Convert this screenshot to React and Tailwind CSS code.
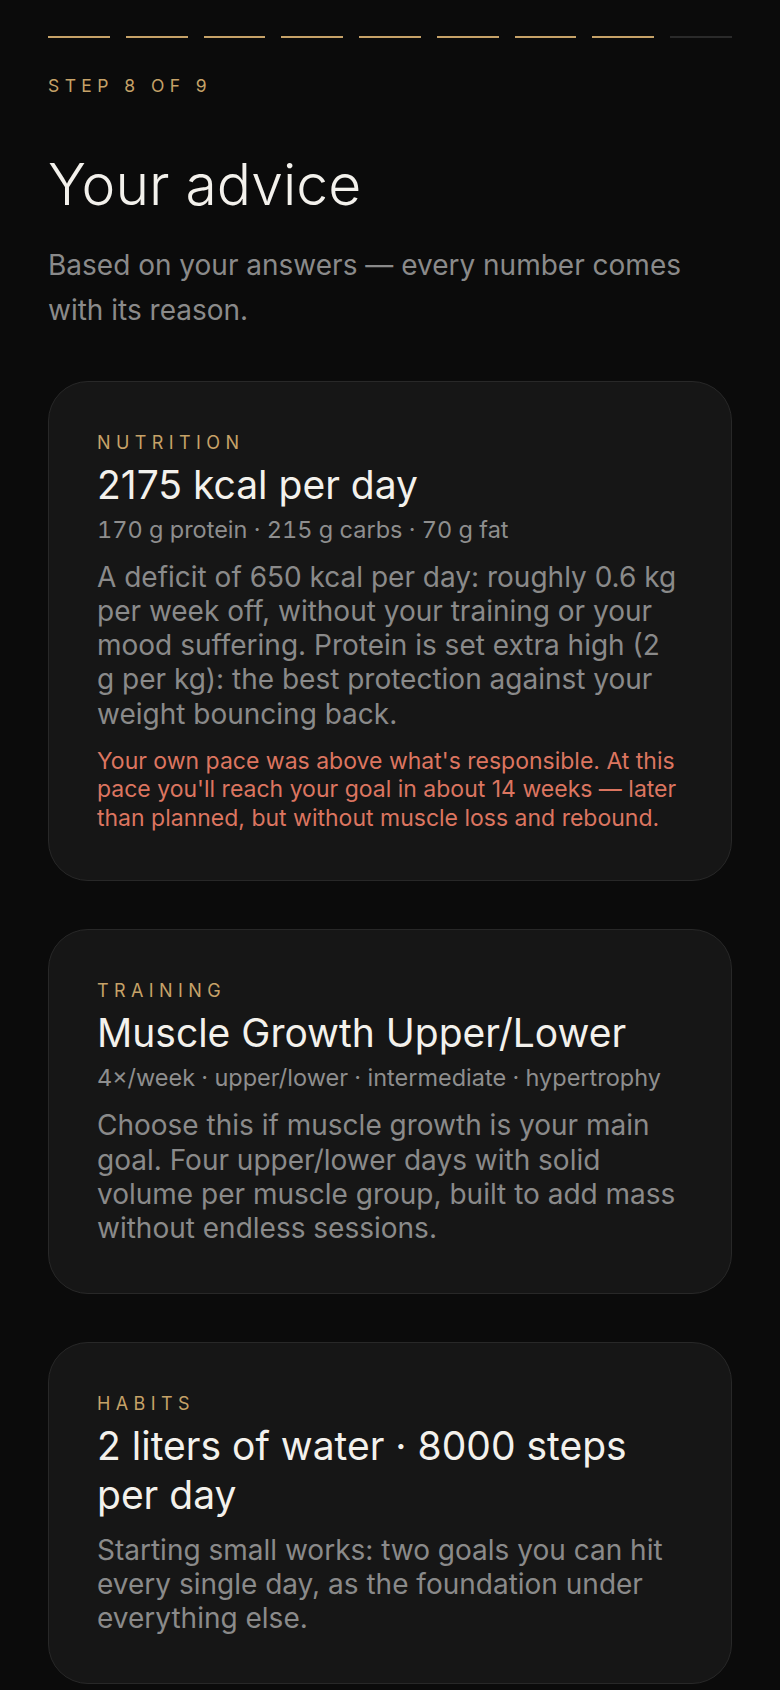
import React from 'react';

const cards = [
  {
    label: 'Nutrition',
    title: '2175 kcal per day',
    meta: '170 g protein · 215 g carbs · 70 g fat',
    body: 'A deficit of 650 kcal per day: roughly 0.6 kg per week off, without your training or your mood suffering. Protein is set extra high (2 g per kg): the best protection against your weight bouncing back.',
    warning: "Your own pace was above what's responsible. At this pace you'll reach your goal in about 14 weeks — later than planned, but without muscle loss and rebound.",
  },
  {
    label: 'Training',
    title: 'Muscle Growth Upper/Lower',
    meta: '4×/week · upper/lower · intermediate · hypertrophy',
    body: 'Choose this if muscle growth is your main goal. Four upper/lower days with solid volume per muscle group, built to add mass without endless sessions.',
  },
  {
    label: 'Habits',
    title: '2 liters of water · 8000 steps per day',
    body: 'Starting small works: two goals you can hit every single day, as the foundation under everything else.',
  },
];

const TOTAL_STEPS = 9;
const CURRENT_STEP = 8;

const AdviceCard = ({ card }) => (
  <div className="rounded-[40px] border border-[#282828] bg-[#161616] p-12">
    <div className="text-[18px] leading-[1.42] uppercase tracking-[0.3em] text-[#c6a268]">
      {card.label}
    </div>
    <h2 className="mt-1 text-[39px] leading-[1.26] font-normal text-[#f3f1ec]">
      {card.title}
    </h2>
    {card.meta && (
      <div className="mt-1 text-[23.5px] leading-[1.42] tabular-nums text-[#8e8e8e]">{card.meta}</div>
    )}
    <p className="mt-3.5 text-[28px] leading-[1.22] text-[#8a8a8a]">{card.body}</p>
    {card.warning && (
      <p className="mt-4 text-[23px] leading-[1.24] text-[#dc7560]">{card.warning}</p>
    )}
  </div>
);

export default function App() {
  return (
    <div
      className="min-h-screen bg-[#0b0b0b] px-12 pt-9 pb-12"
      style={{ fontFamily: 'Inter, "Noto Sans", sans-serif' }}
    >
      {/* progress */}
      <div className="flex gap-4">
        {Array.from({ length: TOTAL_STEPS }).map((_, i) => (
          <div
            key={i}
            className={`h-0.5 flex-1 ${i < CURRENT_STEP ? 'bg-[#c6a268]' : 'bg-[#2a2a2a]'}`}
          />
        ))}
      </div>

      <div className="mt-[35px] text-[17.5px] leading-[1.46] uppercase tracking-[0.31em] text-[#c6a268]">
        Step {CURRENT_STEP} of {TOTAL_STEPS}
      </div>

      <h1 className="mt-[54px] text-[57px] leading-[1.12] font-light text-[#f3f1ec]">
        Your advice
      </h1>
      <p className="mt-[27px] text-[28px] leading-[1.6] text-[#8a8a8a]">
        Based on your answers — every number comes with its reason.
      </p>

      <div className="mt-12 flex flex-col gap-12">
        {cards.map((card) => (
          <AdviceCard key={card.label} card={card} />
        ))}
      </div>
    </div>
  );
}
